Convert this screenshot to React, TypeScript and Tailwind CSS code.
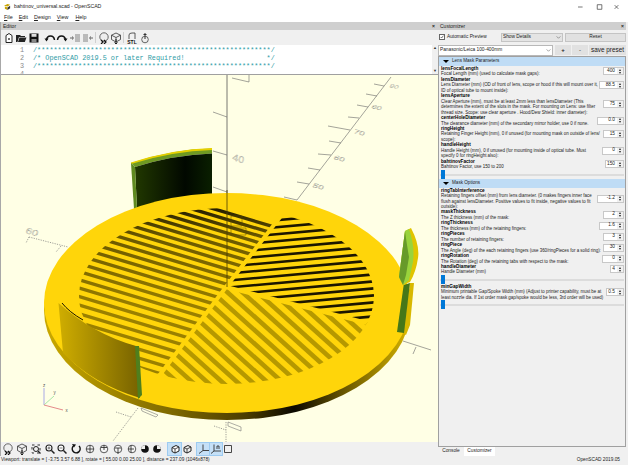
import React from "react";

const ui = { fontFamily: '"Liberation Sans", Arial, sans-serif' };

const leftStripes = Array.from({ length: 25 }, (_, k) => 190 + 6.6 * k + 0.055 * k * k);
const rightStripes = Array.from({ length: 19 }, (_, k) => 218 + 7 * k);
const bottomStripes = Array.from({ length: 28 }, (_, k) => 40 + 15 * k);

function Scene() {
  return (
    <svg viewBox="0 75 437 367" className="block h-full w-full">
      <defs>
        <linearGradient id="side" gradientUnits="userSpaceOnUse" x1="45" y1="0" x2="410" y2="0">
          <stop offset="0" stopColor="#c9a800" />
          <stop offset="0.35" stopColor="#7d6800" />
          <stop offset="0.55" stopColor="#4a3c00" />
          <stop offset="0.68" stopColor="#0a0800" />
          <stop offset="0.82" stopColor="#6b5800" />
          <stop offset="1" stopColor="#d6b400" />
        </linearGradient>
        <linearGradient id="slotL" gradientUnits="userSpaceOnUse" x1="0" y1="205" x2="0" y2="310">
          <stop offset="0" stopColor="#1d1700" />
          <stop offset="0.3" stopColor="#6a5800" />
          <stop offset="1" stopColor="#9a8000" />
        </linearGradient>
        <linearGradient id="tabA" gradientUnits="userSpaceOnUse" x1="134" y1="0" x2="211" y2="0">
          <stop offset="0" stopColor="#213800" />
          <stop offset="0.65" stopColor="#010800" />
          <stop offset="1" stopColor="#0a1f00" />
        </linearGradient>
        <linearGradient id="tabB" gradientUnits="userSpaceOnUse" x1="57" y1="0" x2="136" y2="0">
          <stop offset="0" stopColor="#d0ae00" />
          <stop offset="1" stopColor="#7a6500" />
        </linearGradient>
        <clipPath id="inner">
          <ellipse cx="225.5" cy="296" rx="147.5" ry="88" />
        </clipPath>
        <clipPath id="secL">
          <polygon points="225,287 282,213 60,180 60,390 160,373" />
        </clipPath>
        <clipPath id="secR">
          <polygon points="225,287 282,213 420,190 420,345 367,323" />
        </clipPath>
        <clipPath id="secB">
          <polygon points="225,287 160,373 160,400 400,400 367,323" />
        </clipPath>
      </defs>

      {/* axes behind the disc */}
      <g stroke="#666" strokeWidth="0.6" fill="none">
        <path d="M226 75V287" stroke="#555" strokeWidth="0.8" />
        <path d="M212 112L226 117M212 151L226 155M212 187L226 192M231 78L248 82M248 75V82" />
        <path d="M390 77L296 200" />
        <path d="M283 197L296 200M296 182L308 184M307 168L319 170M317 154L330 155M328 141L340 143M327 126L349 130M347 117L358 118M356 105L367 107M365 94L376 96M373 84L383 86" />
        <path d="M402 341L430 350M415 347L412 354" />
      </g>
      <g fill="none" stroke="#777" strokeWidth="0.3" fontFamily="Liberation Sans, sans-serif" fontSize="10">
        <text transform="matrix(0.95 0.25 -0.3 0.55 311 187)">50</text>
        <text transform="matrix(0.95 0.25 -0.3 0.55 332 159)">60</text>
        <text transform="matrix(0.95 0.25 -0.3 0.55 352 133)">70</text>
        <text transform="matrix(0.85 0.22 -0.3 0.5 370 108)">80</text>
        <text transform="matrix(0.75 0.2 -0.3 0.45 388 87)">90</text>
        <text transform="matrix(0.85 0.25 -0.15 0.75 231 160)" fontSize="12">40</text>
        <text transform="matrix(0.9 0.25 -0.25 0.65 24 233)" fontSize="12">60</text>
      </g>
      <g stroke="#777" strokeWidth="0.7" fill="none" strokeDasharray="1.2 1.2">
        <path d="M28 237L67 247M28 237L25 243M60 246L55 252" />
        <path d="M137 408L112 441M115 412L130 417M225 422V442M213 426L225 430" />
      </g>
      <path d="M140 408L157 415L155 417L141 411ZM227 422L240 427V431L227 426Z" fill="none" stroke="#777" strokeWidth="0.6" />

      {/* back tab */}
      <path d="M130 163Q172 149 211 148.5V153.5Q172 155 134 167Z" fill="#6f9a22" />
      <path d="M130 162.5Q172 149 211 148V150Q172 151 130 164Z" fill="#e6d000" />
      <path d="M134 167Q172 155 211 153.5V195Q170 198 136 209Z" fill="url(#tabA)" />
      <path d="M130 163L134 167L136 209L133 209Z" fill="#5f8a20" />

      {/* disc */}
      <ellipse cx="226" cy="310" rx="183" ry="110" fill="url(#side)" />
      <ellipse cx="226" cy="303" rx="183" ry="110" fill="#ffd50a" />
      <g clipPath="url(#inner)">
        <g clipPath="url(#secL)" stroke="url(#slotL)" strokeWidth="3.4">
          {leftStripes.map((y) => (
            <line key={y} x1="50" y1={y - 30} x2="300" y2={y + 45} />
          ))}
        </g>
        <g clipPath="url(#secR)" stroke="#1c1600" strokeWidth="2.6">
          {rightStripes.map((y) => (
            <line key={y} x1="220" y1={y + 7.2} x2="400" y2={y - 9} />
          ))}
        </g>
        <g clipPath="url(#secB)" stroke="#b59800" strokeWidth="4.6">
          {bottomStripes.map((x) => (
            <line key={x} x1={x - 100} y1="210" x2={x + 100} y2="390" />
          ))}
        </g>
        <path d="M225 287L158 376M225 287L283 212M225 287L370 324" stroke="#ffd50a" strokeWidth="4" fill="none" />
      </g>
      <path d="M226 190V287" stroke="#4a3c00" strokeWidth="0.8" />
      <path d="M230 216H241V226H230ZM230 228H245V235H230Z" fill="none" stroke="#5a4a00" strokeWidth="0.5" />

      {/* front-left tab */}
      <path d="M57.5 303Q92 334 135 346L139 398Q92 384 62 353Z" fill="url(#tabB)" />
      <path d="M61 303Q68 312 82 320" stroke="#1a1500" strokeWidth="1" fill="none" />
      <path d="M134 346L138 346L141 395L137 399Z" fill="#4f7f1d" />

      {/* right tab */}
      <path d="M409 283L413 283L409 325L405 335L402 333Z" fill="#d8b800" />
      <path d="M402.7 285L409 283L403 333L396 332Z" fill="#467718" />
      <path d="M404 231L410 228Q419 245 417 258Q415 272 409 282L402 285L398 277Z" fill="#e0c400" />
      <path d="M404 231L408 229Q414 246 412 262L408 280L402 285L398 277Z" fill="#99d33c" />
      <path d="M404 231Q406 246 408 257L405 275L402 285L398 277Z" fill="#679a2a" />

      {/* axis gizmo */}
      <g strokeWidth="1" fill="none">
        <path d="M43 405V388" stroke="#a9a9e6" />
        <path d="M43 405L53 396" stroke="#a8e6a8" />
        <path d="M43 405L62 410" stroke="#e58a8a" />
      </g>
      <g fontSize="4.5" fill="#555" fontFamily="Liberation Sans, sans-serif">
        <text x="42" y="387">z</text>
        <text x="52.5" y="394">y</text>
        <text x="64.5" y="412">x</text>
      </g>
    </svg>
  );
}

function Ico({ children, className = "" }: { children: React.ReactNode; className?: string }) {
  return (
    <svg viewBox="0 0 12 12" className={"h-[12px] w-[12px] shrink-0 " + className}>
      {children}
    </svg>
  );
}

const Chevron = () => (
  <svg viewBox="0 0 6 4" className="h-[3px] w-[5px] shrink-0" fill="none" stroke="#666" strokeWidth="0.8">
    <path d="M0.5 0.5L3 3L5.5 0.5" />
  </svg>
);

const Sphere = () => (
  <g fill="none" stroke="#333" strokeWidth="0.8">
    <path d="M6 1L10.5 3.2V7.5L6 10L1.5 7.5V3.2Z" />
    <path d="M1.5 3.2L6 5.5L10.5 3.2M6 5.5V10" />
  </g>
);
const PreviewIco = () => (
  <Ico>
    <circle cx="6" cy="5" r="4.2" fill="#eee" stroke="#444" strokeWidth="0.8" />
    <path d="M3 8L5 10L3 12M6 8L8 10L6 12" stroke="#111" strokeWidth="1.2" fill="none" />
  </Ico>
);
const RenderIco = () => (
  <Ico>
    <Sphere />
    <path d="M6 7V12M4.5 10.5L6 12L7.5 10.5" stroke="#111" strokeWidth="0.9" fill="none" />
  </Ico>
);
const Cube = ({ fill = "none" }: { fill?: string }) => (
  <Ico>
    <path d="M3 4.5L7 2.5L10 4V8L6 10L3 8.5Z" fill={fill} stroke="#222" strokeWidth="1" />
    <path d="M3 4.5L6 6L10 4M6 6V10" fill="none" stroke="#222" strokeWidth="0.8" />
  </Ico>
);
const View = ({ d }: { d: string }) => (
  <Ico>
    <circle cx="6" cy="6" r="3.8" fill="#f5f5f5" stroke="#333" strokeWidth="0.8" />
    <path d={d} stroke="#222" strokeWidth="0.8" fill="none" />
  </Ico>
);

function EditorToolbar() {
  return (
    <div className="flex h-[15px] shrink-0 items-center bg-[#f0f0f0] pl-[2px]">
      <Ico>
        <path d="M3 10.5V3.5L6 1.5L9 3.5V10.5Z" fill="#fff" stroke="#222" strokeWidth="1" />
        <path d="M5 7h2M6 6v2" stroke="#222" strokeWidth="0.8" />
      </Ico>
      <Ico>
        <path d="M1 3H5L6 4H10V5H4L2.5 10H1Z" fill="#222" />
        <path d="M4.5 5.5H11.5L9.8 10H3Z" fill="#222" />
      </Ico>
      <Ico className="ml-[1px]">
        <path d="M1.5 1.5H10.5V10.5H1.5Z" fill="#111" />
        <path d="M3.5 2H8.5V4.8H3.5Z" fill="#ddd" />
        <path d="M3.5 7H8.5V10.5H3.5Z" fill="#888" />
      </Ico>
      <Ico className="ml-[4px]">
        <path d="M2.5 8Q3 4 6.5 4Q10 4 10.5 8" stroke="#111" strokeWidth="1.5" fill="none" />
        <path d="M0.5 6.5L4.5 6.5L2.5 9.5Z" fill="#111" />
      </Ico>
      <Ico>
        <path d="M1.5 8Q2 4 5.5 4Q9 4 9.5 8" stroke="#111" strokeWidth="1.5" fill="none" />
        <path d="M7.5 6.5L11.5 6.5L9.5 9.5Z" fill="#111" />
      </Ico>
      <Ico className="ml-[1px]">
        <path d="M6 3H11M6 5H11M6 7H11M6 9H11" stroke="#777" strokeWidth="0.9" />
        <path d="M1 6H4M3 4.5L4.6 6L3 7.5" stroke="#555" strokeWidth="0.9" fill="none" />
      </Ico>
      <Ico className="ml-[1px]">
        <path d="M1 3H6M1 5H6M1 7H6M1 9H6" stroke="#777" strokeWidth="0.9" />
        <path d="M11 6H8M9 4.5L7.4 6L9 7.5" stroke="#555" strokeWidth="0.9" fill="none" />
      </Ico>
      <div className="ml-[1px] h-[11px] w-px bg-[#d0d0d0]" />
      <div className="ml-[2px]">
        <PreviewIco />
      </div>
      <RenderIco />
      <div className="ml-[1px] h-[11px] w-px bg-[#d0d0d0]" />
      <Ico className="ml-[2px]">
        <path d="M3 7V3Q3 1 6 1H9V7" fill="none" stroke="#333" strokeWidth="0.8" />
        <text x="6" y="11.5" fontSize="5" fontWeight="700" textAnchor="middle" fill="#111" fontFamily="Liberation Sans, sans-serif">
          STL
        </text>
      </Ico>
      <Ico className="ml-[1px]">
        <circle cx="6" cy="7.5" r="3.3" fill="#eee" stroke="#444" strokeWidth="0.8" />
        <path d="M6 1V7M4.5 2.5H7.5" stroke="#333" strokeWidth="1" />
      </Ico>
    </div>
  );
}

function ViewToolbar() {
  const active = "h-[12px] w-[13px] bg-[#c5e0f7] outline outline-[#9dcbf1]";
  return (
    <div className="flex h-[14px] shrink-0 items-center bg-[#f0f0f0] pl-[1px]">
      <PreviewIco />
      <div className="ml-[2px]">
        <RenderIco />
      </div>
      <Ico className="ml-[2px]">
        <path d="M2 2H10V10H2Z" fill="none" stroke="#333" strokeWidth="1" strokeDasharray="2.5 3" />
        <circle cx="6" cy="6" r="2.5" fill="none" stroke="#222" strokeWidth="1" />
        <path d="M8 8L10.5 10.5" stroke="#222" strokeWidth="1.2" />
      </Ico>
      <Ico className="ml-[2px]">
        <circle cx="5" cy="5" r="3" fill="#fff" stroke="#222" strokeWidth="1.1" />
        <path d="M7.5 7.5L10.5 10.5" stroke="#222" strokeWidth="1.5" />
        <path d="M3.5 5H6.5M5 3.5V6.5" stroke="#222" strokeWidth="0.6" />
      </Ico>
      <Ico>
        <circle cx="5" cy="5" r="3" fill="#fff" stroke="#222" strokeWidth="1.1" />
        <path d="M7.5 7.5L10.5 10.5" stroke="#222" strokeWidth="1.5" />
        <path d="M3.5 5H6.5" stroke="#222" strokeWidth="0.6" />
      </Ico>
      <Ico className="ml-[2px]">
        <path d="M4 2.5A4 4 0 1 0 9 3" fill="none" stroke="#111" strokeWidth="1.4" />
        <path d="M2 1L6 1.5L4 4.5Z" fill="#111" />
      </Ico>
      <div className="ml-[2px]">
        <View d="M2.2 6H9.8M6 2.2V9.8" />
      </div>
      <div className="ml-[2px]">
        <View d="M3 4.5H9M6 2.2V7" />
      </div>
      <div className="ml-[2px]">
        <View d="M3 5H9M6 5V11" />
      </div>
      <div className="ml-[2px]">
        <View d="M2.2 6H8M5 2.2V9.8" />
      </div>
      <Ico className="ml-[1px]">
        <circle cx="6" cy="6" r="3.8" fill="#111" />
        <path d="M6 2.2A3.8 3.8 0 0 0 2.2 6L6 6Z" fill="#eee" />
      </Ico>
      <Ico>
        <circle cx="6" cy="6" r="3.8" fill="#111" />
        <path d="M6 2.2A3.8 3.8 0 0 1 9.8 6L6 6Z" fill="#eee" />
      </Ico>
      <div className={"ml-[5px] flex items-center justify-center " + active}>
        <Cube fill="#fff" />
      </div>
      <Cube />
      <div className={"ml-[4px] flex items-center justify-center " + active}>
        <Ico>
          <path d="M5 1.5V7.5L1 10.5M5 7.5H11" stroke="#333" strokeWidth="0.9" fill="none" />
        </Ico>
      </div>
      <div className="flex h-[12px] w-[12px] items-center justify-center bg-[#c5e0f7] outline outline-[#9dcbf1]">
        <Ico>
          <path d="M4 1.5V8L1 10.5M4 8H11M7 3V6M9 3V6M7 3H9" stroke="#333" strokeWidth="0.9" fill="none" />
        </Ico>
      </div>
      <Ico>
        <path d="M2.5 2.5H9.5V9.5H2.5Z" fill="none" stroke="#333" strokeWidth="0.9" />
      </Ico>
    </div>
  );
}

function Spin({ value, w }: { value: string; w: number }) {
  return (
    <div
      className="relative flex h-[8px] shrink-0 items-center justify-end border border-[#c8c8c8] bg-white pr-[8px] text-[4.8px] leading-none text-[#222]"
      style={{ width: w }}
    >
      {value}
      <span className="absolute right-0 top-0 flex h-full w-[6px] flex-col items-center justify-around bg-[#f0f0f0]">
        <span className="h-0 w-0 border-x-[1.5px] border-b-[2px] border-x-transparent border-b-[#222]" />
        <span className="h-0 w-0 border-x-[1.5px] border-t-[2px] border-x-transparent border-t-[#222]" />
      </span>
    </div>
  );
}

function Param({ name, lines, value, w }: { name: string; lines: string[]; value: string; w: number }) {
  return (
    <div className="flex items-center pl-[2px] pr-[1px]">
      <div className="min-w-0 flex-1 whitespace-nowrap text-[4.45px] leading-[5.45px] text-[#222]">
        <div className="text-[4.7px] font-bold text-black">{name}</div>
        {lines.map((l) => (
          <div key={l}>{l}</div>
        ))}
      </div>
      <Spin value={value} w={w} />
    </div>
  );
}

function Slider() {
  return (
    <div className="relative h-[9px] shrink-0">
      <div className="absolute left-[1px] right-[1px] top-[4px] h-[2px] bg-[#dcdcdc]" />
      <div className="absolute left-[2px] top-0 h-[9px] w-[4px] bg-[#0078d7]" />
    </div>
  );
}

function Section({ title }: { title: string }) {
  return (
    <div className="flex h-[9px] shrink-0 items-center gap-[3px] bg-[#bfdcf5] pl-[4px] text-[4.6px] leading-none text-[#222]">
      <span className="h-0 w-0 border-x-[3px] border-t-[3px] border-x-transparent border-t-black" />
      {title}
    </div>
  );
}

function Customizer() {
  return (
    <div className="flex w-[190px] shrink-0 flex-col bg-[#f0f0f0] pr-[2px] text-[4.8px]">
      <div className="flex h-[8px] shrink-0 items-center justify-between bg-[#cfcfcf] pl-[2px] pr-[2px] text-[5px] leading-none text-[#222]">
        <span>Customizer</span>
        <span className="font-bold">×</span>
      </div>
      <div className="flex h-[14px] shrink-0 items-center pl-[1px] text-[4.8px] leading-none text-[#222]">
        <svg viewBox="0 0 6 6" className="mr-[2px] h-[6px] w-[6px] shrink-0 border border-[#666] bg-white">
          <path d="M1 3L2.5 4.5L5 1" fill="none" stroke="#222" strokeWidth="0.9" />
        </svg>
        <span className="w-[54px]">Automatic Preview</span>
        <div className="flex h-[9px] w-[62px] items-center justify-between border border-[#c4c4c4] bg-[#e4e4e4] px-[1px]">
          <span>Show Details</span>
          <Chevron />
        </div>
        <div className="ml-[2px] flex h-[9px] flex-1 items-center justify-center border border-[#c4c4c4] bg-[#e1e1e1]">Reset</div>
      </div>
      <div className="flex h-[12px] shrink-0 items-center gap-[1px] text-[4.8px] leading-none text-[#222]">
        <div className="flex h-[11px] w-[115px] items-center justify-between border border-[#b8b8b8] bg-white px-[1px]">
          <span>Panasonic/Leica 100-400mm</span>
          <Chevron />
        </div>
        <div className="ml-[1px] flex h-[10px] w-[16px] items-center justify-center bg-[#e1e1e1] text-[6px] font-bold">+</div>
        <div className="flex h-[10px] w-[16px] items-center justify-center bg-[#e1e1e1] text-[6px]">-</div>
        <div className="flex h-[10px] min-w-0 flex-1 items-center justify-center whitespace-nowrap bg-[#e1e1e1] text-[6.4px]">save preset</div>
      </div>
      <div className="flex min-h-0 flex-1 flex-col border border-[#a0a0a0] bg-[#f0f0f0]">
        <Section title="Lens Mask Parameters" />
        <Param name="lensFocalLength" lines={["Focal Length (mm) (used to calculate mask gaps):"]} value="400" w={21} />
        <Param
          name="lensDiameter"
          lines={["Lens Diameter (mm) (OD of front of lens, scope or hood if this will mount over it,", "ID of optical tube to mount inside):"]}
          value="88.5"
          w={25}
        />
        <Param
          name="lensAperture"
          lines={[
            "Clear Aperture (mm), must be at least 2mm less than lensDiameter (This",
            "determines the extent of the slots in the mask. For mounting on Lens: use filter",
            "thread size. Scope: use clear aperture . Hood/Dew Shield: inner diameter):",
          ]}
          value="75"
          w={21}
        />
        <Param name="centerHoleDiameter" lines={["The clearance diameter (mm) of the secondary mirror holder, use 0 if none."]} value="0.0" w={27} />
        <Param
          name="ringHeight"
          lines={["Retaining Finger Height (mm), 0 if unused (for mounting mask on outside of lens/", "scope):"]}
          value="15"
          w={21}
        />
        <Param
          name="handleHeight"
          lines={["Handle Height (mm), 0 if unused (for mounting inside of optical tube. Must", "specify 0 for ringHeight also):"]}
          value="0"
          w={22}
        />
        <Param name="bahtinovFactor" lines={["Bahtinov Factor, use 150 to 200"]} value="150" w={19} />
        <Slider />
        <Section title="Mask Options" />
        <Param
          name="ringTabInterference"
          lines={[
            "Retaining fingers offset (mm) from lens diameter. (0 makes fingers inner face",
            "flush against lensDiameter. Positive values to fit inside, negative values to fit",
            "outside):",
          ]}
          value="-1.2"
          w={27}
        />
        <Param name="maskThickness" lines={["The Z thickness (mm) of the mask:"]} value="2" w={21} />
        <Param name="ringThickness" lines={["The thickness (mm) of the retaining fingers:"]} value="1.6" w={25} />
        <Param name="ringPieces" lines={["The number of retaining fingers:"]} value="3" w={21} />
        <Param name="ringPiece" lines={["The Angle (deg) of the each retaining fingers (use 360/ringPieces for a solid ring):"]} value="30" w={21} />
        <Param name="ringRotation" lines={["The Rotation (deg) of the retaining tabs with respect to the mask:"]} value="0" w={22} />
        <Param name="handleDiameter" lines={["Handle Diameter (mm)"]} value="4" w={14} />
        <Slider />
        <Param
          name="minGapWidth"
          lines={["Minimum printable Gap/Spoke Width (mm) (Adjust to printer capability, must be at", "least nozzle dia. If 1st order mask gap/spoke would be less, 3rd order will be used)"]}
          value="0.5"
          w={18}
        />
        <Slider />
      </div>
      <div className="flex h-[9px] shrink-0 text-[4.8px] leading-none text-[#222]">
        <div className="flex w-[26px] items-center justify-center">Console</div>
        <div className="flex w-[31px] items-center justify-center bg-white">Customizer</div>
      </div>
    </div>
  );
}

export default function App() {
  return (
    <div className="flex h-[465px] w-[628px] flex-col overflow-hidden bg-[#f0f0f0]" style={ui}>
      <div className="flex h-[13px] shrink-0 items-center bg-white pl-[4px] text-[5.2px] leading-none text-[#222]">
        <svg viewBox="0 0 8 8" className="mr-[3px] h-[7px] w-[7px]">
          <path d="M0 3L4 1L7 2L4 4ZM1 4L4 5V8L1 6.5Z" fill="#c9a400" />
          <path d="M4 5L7 3V6L4 8Z" fill="#333" />
        </svg>
        <span className="flex-1">bahtinov_universal.scad - OpenSCAD</span>
        <svg viewBox="0 0 48 8" className="mr-[6px] h-[8px] w-[44px]" fill="none" stroke="#444" strokeWidth="0.8">
          <path d="M0 4H5" />
          <path d="M21 1.5H26V6.5H21Z" />
          <path d="M40 2L44 6M44 2L40 6" />
        </svg>
      </div>
      <div className="flex h-[9px] shrink-0 items-center bg-white text-[5.4px] leading-none text-[#222]">
        <span className="ml-[4px]"><u>F</u>ile</span>
        <span className="ml-[6px]"><u>E</u>dit</span>
        <span className="ml-[6px]"><u>D</u>esign</span>
        <span className="ml-[6px]"><u>V</u>iew</span>
        <span className="ml-[7px]"><u>H</u>elp</span>
      </div>
      <div className="flex min-h-0 flex-1">
        <div className="flex w-[438px] shrink-0 flex-col border-l border-[#a8a8a8]">
          <div className="flex h-[8px] shrink-0 items-center justify-between bg-[#cfcfcf] pl-[2px] pr-[3px] text-[5px] leading-none text-[#222]">
            <span>Editor</span>
            <span className="font-bold">×</span>
          </div>
          <EditorToolbar />
          <div className="flex h-[30px] shrink-0 overflow-hidden border-b border-[#a0a0a0] bg-white">
            <div
              className="w-[23px] shrink-0 pt-[0.5px] text-right text-[6.8px] leading-[8px] text-[#8a8a8a]"
              style={{ fontFamily: '"Liberation Mono", monospace' }}
            >
              <div>1</div>
              <div>2</div>
              <div>3</div>
              <div className="h-[4px]">4</div>
            </div>
            <div
              className="ml-[9px] flex-1 whitespace-pre pt-[0.5px] text-[6.83px] leading-[8px] text-[#2e9ca6]"
              style={{ fontFamily: '"Liberation Mono", monospace' }}
            >
              <div>{"/" + "*".repeat(56) + "*/"}</div>
              <div>{"/* OpenSCAD 2019.5 or later Required!                    */"}</div>
              <div>{"/" + "*".repeat(56) + "*/"}</div>
            </div>
            <div className="flex w-[6px] shrink-0 flex-col items-center justify-between bg-[#f0f0f0] py-[1px] text-[4px] leading-none text-[#333]">
              <span>▲</span>
              <span>▼</span>
            </div>
          </div>
          <div className="min-h-0 flex-1 bg-[#ffffe5]">
            <Scene />
          </div>
          <ViewToolbar />
        </div>
        <Customizer />
      </div>
      <div className="flex h-[9px] shrink-0 items-center justify-between bg-[#f0f0f0] pl-[1px] pr-[8px] text-[4.75px] leading-none text-[#222]">
        <span>Viewport: translate = [ -3.75 3.57 6.88 ], rotate = [ 55.00 0.00 25.00 ], distance = 237.09 (1046x878)</span>
        <span>OpenSCAD 2019.05</span>
      </div>
    </div>
  );
}
